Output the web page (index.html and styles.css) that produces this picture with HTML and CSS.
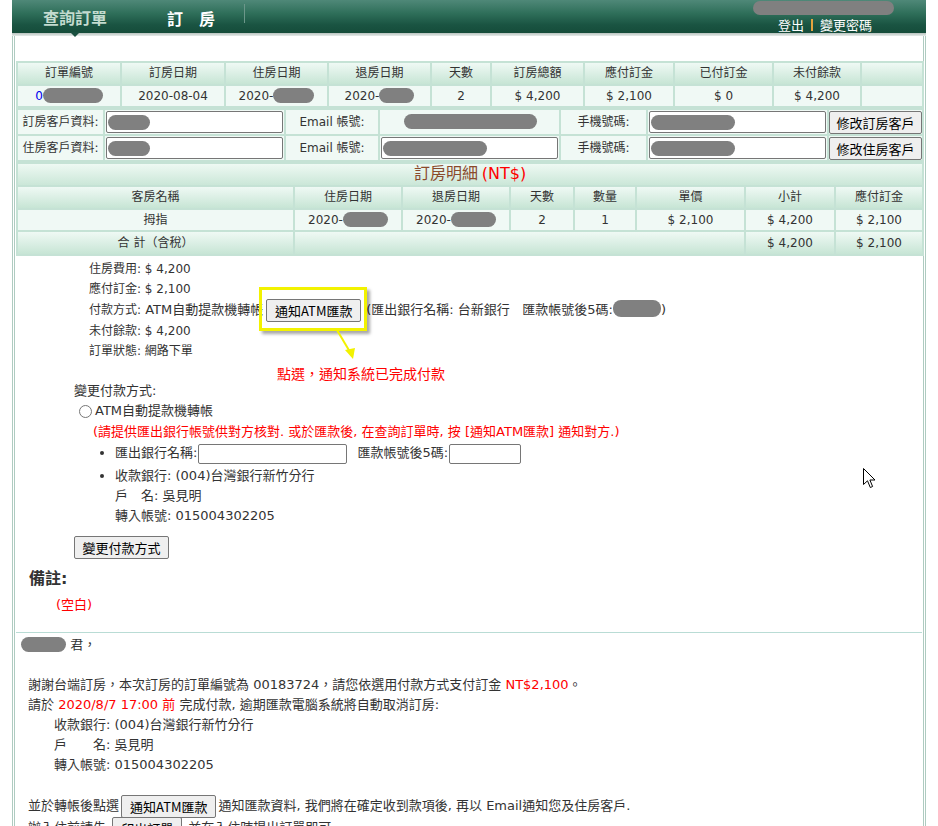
FILE: index.html
```html
<!DOCTYPE html>
<html lang="zh-Hant">
<head>
<meta charset="utf-8">
<title>查詢訂單</title>
<link rel="stylesheet" href="styles.css">
</head>
<body>
<div class="page">
  <header class="topbar">
    <nav class="tabs">
      <span class="tab active">查詢訂單</span>
      <span class="tab">訂　房</span>
      <span class="tab-sep"></span>
    </nav>
    <div class="user">
      <span class="redact user-name"></span>
      <div class="links"><span>登出</span><span class="bar"></span><span>變更密碼</span></div>
    </div>
  </header>
  <div class="topshadow"></div>

  <main class="main">
    <table class="grid summary">
      <colgroup>
        <col style="width:104px"><col style="width:104px"><col style="width:103px"><col style="width:103px"><col style="width:60px">
        <col style="width:93px"><col style="width:90px"><col style="width:99px"><col style="width:88px"><col style="width:62px">
      </colgroup>
      <tr class="head">
        <th>訂單編號</th><th>訂房日期</th><th>住房日期</th><th>退房日期</th><th>天數</th>
        <th>訂房總額</th><th>應付訂金</th><th>已付訂金</th><th>未付餘款</th><th></th>
      </tr>
      <tr class="data">
        <td><span class="link">0</span><span class="redact r-order"></span></td>
        <td>2020-08-04</td>
        <td>2020-<span class="redact r-date"></span></td>
        <td>2020-<span class="redact r-date2"></span></td>
        <td>2</td>
        <td>$ 4,200</td><td>$ 2,100</td><td>$ 0</td><td>$ 4,200</td><td></td>
      </tr>
    </table>

    <table class="grid customers">
      <colgroup>
        <col style="width:87px"><col style="width:181px"><col style="width:94px"><col style="width:181px">
        <col style="width:87px"><col style="width:181px"><col style="width:95px">
      </colgroup>
      <tr>
        <td>訂房客戶資料:</td>
        <td><div class="field"><span class="redact r-name"></span></div></td>
        <td>Email 帳號:</td>
        <td><span class="redact r-mail"></span></td>
        <td>手機號碼:</td>
        <td><div class="field"><span class="redact r-phone"></span></div></td>
        <td><button class="btn btn-cell">修改訂房客戶</button></td>
      </tr>
      <tr>
        <td>住房客戶資料:</td>
        <td><div class="field"><span class="redact r-name"></span></div></td>
        <td>Email 帳號:</td>
        <td><div class="field"><span class="redact r-mail2"></span></div></td>
        <td>手機號碼:</td>
        <td><div class="field"><span class="redact r-phone"></span></div></td>
        <td><button class="btn btn-cell">修改住房客戶</button></td>
      </tr>
    </table>

    <table class="grid details">
      <colgroup>
        <col style="width:277px"><col style="width:108px"><col style="width:108px"><col style="width:64px">
        <col style="width:62px"><col style="width:109px"><col style="width:90px"><col style="width:88px">
      </colgroup>
      <tr class="title"><th colspan="8"><span class="title-text">訂房明細</span> <span class="title-unit">(NT$)</span></th></tr>
      <tr class="head">
        <th>客房名稱</th><th>住房日期</th><th>退房日期</th><th>天數</th><th>數量</th><th>單價</th><th>小計</th><th>應付訂金</th>
      </tr>
      <tr class="data">
        <td>拇指</td>
        <td>2020-<span class="redact r-date3"></span></td>
        <td>2020-<span class="redact r-date3"></span></td>
        <td>2</td><td>1</td><td>$ 2,100</td><td>$ 4,200</td><td>$ 2,100</td>
      </tr>
      <tr class="head total">
        <th>合 計（含稅）</th><th colspan="5"></th><th>$ 4,200</th><th>$ 2,100</th>
      </tr>
    </table>

    <section class="payinfo">
      <div class="line small">住房費用: $ 4,200</div>
      <div class="line small">應付訂金: $ 2,100</div>
      <div class="line pay"><span class="small">付款方式:</span> ATM自動提款機轉帳<button class="btn btn-notify">通知ATM匯款</button>(匯出銀行名稱: 台新銀行&nbsp;&nbsp; 匯款帳號後5碼:<span class="redact r-last5"></span>)</div>
      <div class="line small">未付餘款: $ 4,200</div>
      <div class="line small">訂單狀態: 網路下單</div>
    </section>

    <section class="change">
      <div class="line">變更付款方式:</div>
      <label class="radio-line"><input type="radio" name="pay" class="radio">ATM自動提款機轉帳</label>
      <div class="line note">(請提供匯出銀行帳號供對方核對. 或於匯款後, 在查詢訂單時, 按 [通知ATM匯款] 通知對方.)</div>
      <ul class="bank">
        <li class="bank-input">匯出銀行名稱:<input type="text" class="in-bank"> 匯款帳號後5碼:<input type="text" class="in-last5"></li>
        <li><div class="line">收款銀行: (004)台灣銀行新竹分行</div><div class="line">戶　名: 吳見明</div><div class="line">轉入帳號: 015004302205</div></li>
      </ul>
      <button class="btn btn-change">變更付款方式</button>
    </section>

    <h3 class="remark-title">備註:</h3>
    <div class="line remark">(空白)</div>

    <hr class="divider">

    <section class="letter">
      <div class="line"><span class="redact r-greet"></span> 君，</div>
      <div class="line"></div>
      <div class="line">謝謝台端訂房，本次訂房的訂單編號為 00183724，請您依選用付款方式支付訂金 <span class="red">NT$2,100</span>。</div>
      <div class="line">請於 <span class="red">2020/8/7 17:00 前</span> 完成付款, 逾期匯款電腦系統將自動取消訂房:</div>
      <div class="line indent">收款銀行: (004)台灣銀行新竹分行</div>
      <div class="line indent">戶　　名: 吳見明</div>
      <div class="line indent">轉入帳號: 015004302205</div>
      <div class="line"></div>
      <div class="line btnline">並於轉帳後點選<button class="btn">通知ATM匯款</button>通知匯款資料, 我們將在確定收到款項後, 再以 Email通知您及住房客戶.</div>
      <div class="line btnline">辦入住前請先 <button class="btn">印出訂單</button> 並在入住時提出訂單即可.</div>
    </section>
  </main>
</div>

<div class="callout"></div>
<svg class="callout-arrow" width="30" height="34" viewBox="0 0 30 34">
  <line x1="4" y1="2" x2="17" y2="24" stroke="#f2f200" stroke-width="2"/>
  <polygon points="12,22 22,20 20,31" fill="#f2f200"/>
</svg>
<div class="callout-text">點選，通知系統已完成付款</div>

<svg class="cursor" width="13" height="21" viewBox="0 0 13 21">
  <path d="M0.5 0.5 L0.5 16.5 L4.5 12.8 L7.3 19.5 L9.6 18.5 L6.9 12 L12 12 Z" fill="#fff" stroke="#000" stroke-width="1"/>
</svg>
</body>
</html>
```

FILE: styles.css
```css
body {
  margin: 0;
  font-family: "DejaVu Sans", "Noto Sans CJK TC", sans-serif;
  font-size: 13px;
  line-height: 20px;
  color: #333;
  background: #fff;
}

.page {
  margin-left: 12px;
  width: 914px;
}

.line {
  height: 20px;
  white-space: nowrap;
}
.small {
  font-size: 12px;
}

/* ---------- top bar ---------- */
.topbar {
  height: 33px;
  display: flex;
  justify-content: space-between;
  background: linear-gradient(#4f8878 0%, #2f6f5a 40%, #1a5442 75%, #154c3a 100%);
}
.tabs {
  display: flex;
  align-items: center;
  padding-left: 31px;
  height: 33px;
}
.tab {
  position: relative;
  font-family: "Noto Sans CJK TC", sans-serif;
  font-size: 16px;
  font-weight: bold;
  line-height: 20px;
  color: #fff;
  margin-right: 29px;
  margin-top: 2px;
}
.tab.active {
  color: #c3dbcf;
  margin-right: 60px;
  margin-top: 0;
}
.tab.active::after {
  content: "";
  position: absolute;
  left: 27px;
  top: 25px;
  border-left: 5px solid transparent;
  border-right: 5px solid transparent;
  border-top: 5px solid #1a5040;
}
.tab-sep {
  width: 1px;
  height: 19px;
  background: #6c978a;
  margin-top: -6px;
}
.user {
  display: flex;
  flex-direction: column;
  align-items: flex-end;
  padding-right: 54px;
}
.user-name {
  width: 141px;
  height: 15px;
  margin-top: 1px;
  margin-right: -22px;
  border-radius: 8px;
}
.links {
  display: flex;
  align-items: center;
  color: #fff;
  font-family: "Noto Sans CJK TC", sans-serif;
  font-size: 13px;
  line-height: 16px;
  margin-top: 2px;
}
.links .bar {
  width: 2px;
  height: 12px;
  background: #e4a43e;
  margin: 0 7px;
}
.topshadow {
  height: 3px;
  background: linear-gradient(#b8c3bf, #e6ebe9);
}

/* ---------- main frame ---------- */
.main {
  border-left: 3px double #aecbc0;
  border-right: 3px double #aecbc0;
  padding: 25px 1px 0;
}

.redact {
  display: inline-block;
  background: #808080;
  border-radius: 8px;
  height: 15px;
  vertical-align: -3px;
}

/* ---------- grids ---------- */
.grid {
  width: 906px;
  border-collapse: collapse;
  table-layout: fixed;
  font-size: 12px;
}
.grid th,
.grid td {
  border: 2px solid #c5e2d5;
  padding: 0;
  text-align: center;
  font-weight: normal;
  white-space: nowrap;
  overflow: hidden;
}
.grid .head th {
  height: 21px;
  line-height: 19px;
  background: linear-gradient(#eff9f4, #c7e5d5);
}
.grid .data td {
  height: 20px;
  line-height: 20px;
  background: #f0f9f5;
}
.link { color: #0000ee; }
.r-order { width: 60px; }
.r-date { width: 41px; }
.r-date2 { width: 35px; }
.r-date3 { width: 45px; }

.customers td {
  height: 24px;
  background: #f0f9f5;
}
.field {
  margin: 0 1px;
  height: 20px;
  background: #fff;
  border: 1px solid #767676;
  border-radius: 2px;
  text-align: left;
  display: flex;
  align-items: center;
  padding-left: 1px;
}
.r-name { width: 42px; }
.r-mail { width: 133px; margin-left: 2px; }
.r-mail2 { width: 104px; }
.r-phone { width: 84px; }

.btn {
  font-family: "Noto Sans CJK TC", sans-serif;
  font-size: 13px;
  line-height: 17px;
  color: #000;
  background: #efefef;
  border: 1px solid #767676;
  border-radius: 2px;
  padding: 2px 8px;
  margin: 0 2px;
  vertical-align: middle;
}
.btn-cell {
  width: 93px;
  padding: 2px 0;
  margin: 0;
}

.details .title th {
  height: 20px;
  line-height: 20px;
  background: linear-gradient(#eef9f3, #cbe7d8);
}
.title-text {
  color: #8a4a2c;
  font-size: 16px;
}
.title-unit {
  color: #ff0000;
  font-size: 16px;
}
.details .head th {
  height: 21px;
}
.details .data td {
  height: 20px;
}
.details .total th {
  height: 22px;
}

/* ---------- payment info ---------- */
.payinfo {
  margin-top: 3px;
  padding-left: 73px;
}
.payinfo .pay {
  height: 22px;
  line-height: 22px;
}
.btn-notify {
  width: 95px;
  padding: 2px 0;
  margin: 0 5px 0 3px;
}
.r-last5 { width: 48px; height: 17px; }

.change {
  margin-top: 20px;
  padding-left: 58px;
}
.radio-line {
  display: flex;
  align-items: center;
  height: 20px;
  padding-left: 5px;
}
.radio {
  width: 13px;
  height: 13px;
  margin: 0 3px 0 0;
}
.note {
  color: #ff0000;
  padding-left: 19px;
  margin-top: 1px;
}
.bank {
  margin: 0;
  padding-left: 41px;
}
.bank-input {
  height: 24px;
  line-height: 22px;
  white-space: nowrap;
}
.bank input {
  height: 18px;
  border: 1px solid #767676;
  border-radius: 2px;
  padding: 0;
  margin: 0 1px;
  vertical-align: middle;
}
.in-bank { width: 147px; margin-right: 6px !important; }
.in-last5 { width: 70px; }
.btn-change {
  display: block;
  margin: 10px 0 0;
  padding: 2px 0;
  width: 95px;
}

.remark-title {
  margin: 10px 0 0 13px;
  font-size: 16px;
  line-height: 20px;
  height: 20px;
  font-weight: bold;
}
.remark {
  color: #ff0000;
  margin: 6px 0 0 40px;
}
.divider {
  border: 0;
  border-top: 1px solid #b9dcd5;
  margin: 17px 0 2px;
}

/* ---------- letter ---------- */
.letter {
  padding-left: 12px;
}
.r-greet {
  width: 45px;
  margin-left: -7px;
}
.red { color: #ff0000; }
.indent { padding-left: 26px; }
.btnline { height: 22px; line-height: 22px; }
.btnline .btn { margin: 0 2px; }

/* ---------- overlays ---------- */
.callout {
  position: absolute;
  left: 259px;
  top: 287px;
  width: 102px;
  height: 38px;
  border: 3px solid #f2f200;
  box-shadow: 3px 3px 3px rgba(0, 0, 0, 0.35);
}
.callout-arrow {
  position: absolute;
  left: 333px;
  top: 328px;
}
.callout-text {
  position: absolute;
  left: 277px;
  top: 365px;
  color: #ff0000;
  font-size: 14px;
  line-height: 18px;
}
.cursor {
  position: absolute;
  left: 863px;
  top: 468px;
}
```
